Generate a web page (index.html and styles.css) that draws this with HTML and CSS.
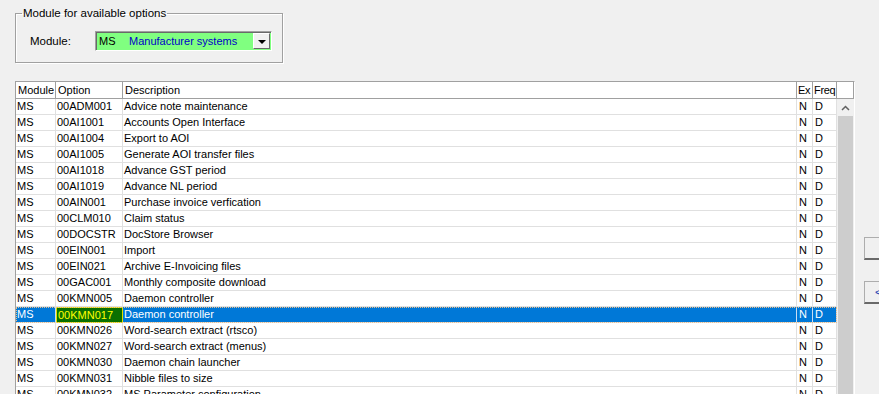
FILE: index.html
```html
<!DOCTYPE html>
<html lang="en">
<head>
    <meta charset="UTF-8">
    <title>Module options</title>
    <link rel="stylesheet" href="styles.css">
</head>
<body>
    <fieldset class="module-group">
        <legend>Module for available options</legend>
        <div class="module-row">
            <label class="module-label">Module:</label>
            <div class="combo">
                <span class="combo-code">MS</span>
                <span class="combo-name">Manufacturer systems</span>
                <span class="combo-button"><span class="arrow"></span></span>
            </div>
        </div>
    </fieldset>

    <div class="main">
        <div class="grid">
            <div class="grid-header">
                <div class="hcell">Module</div>
                <div class="hcell">Option</div>
                <div class="hcell">Description</div>
                <div class="hcell narrow">Ex</div>
                <div class="hcell narrow">Freq</div>
                <div class="hcell corner"></div>
            </div>
            <div class="grid-body">
                <div class="rows">
                    <div class="row"><div class="cell">MS</div><div class="cell">00ADM001</div><div class="cell">Advice note maintenance</div><div class="cell">N</div><div class="cell">D</div></div>
                    <div class="row"><div class="cell">MS</div><div class="cell">00AI1001</div><div class="cell">Accounts Open Interface</div><div class="cell">N</div><div class="cell">D</div></div>
                    <div class="row"><div class="cell">MS</div><div class="cell">00AI1004</div><div class="cell">Export to AOI</div><div class="cell">N</div><div class="cell">D</div></div>
                    <div class="row"><div class="cell">MS</div><div class="cell">00AI1005</div><div class="cell">Generate AOI transfer files</div><div class="cell">N</div><div class="cell">D</div></div>
                    <div class="row"><div class="cell">MS</div><div class="cell">00AI1018</div><div class="cell">Advance GST period</div><div class="cell">N</div><div class="cell">D</div></div>
                    <div class="row"><div class="cell">MS</div><div class="cell">00AI1019</div><div class="cell">Advance NL period</div><div class="cell">N</div><div class="cell">D</div></div>
                    <div class="row"><div class="cell">MS</div><div class="cell">00AIN001</div><div class="cell">Purchase invoice verfication</div><div class="cell">N</div><div class="cell">D</div></div>
                    <div class="row"><div class="cell">MS</div><div class="cell">00CLM010</div><div class="cell">Claim status</div><div class="cell">N</div><div class="cell">D</div></div>
                    <div class="row"><div class="cell">MS</div><div class="cell">00DOCSTR</div><div class="cell">DocStore Browser</div><div class="cell">N</div><div class="cell">D</div></div>
                    <div class="row"><div class="cell">MS</div><div class="cell">00EIN001</div><div class="cell">Import</div><div class="cell">N</div><div class="cell">D</div></div>
                    <div class="row"><div class="cell">MS</div><div class="cell">00EIN021</div><div class="cell">Archive E-Invoicing files</div><div class="cell">N</div><div class="cell">D</div></div>
                    <div class="row"><div class="cell">MS</div><div class="cell">00GAC001</div><div class="cell">Monthly composite download</div><div class="cell">N</div><div class="cell">D</div></div>
                    <div class="row"><div class="cell">MS</div><div class="cell">00KMN005</div><div class="cell">Daemon controller</div><div class="cell">N</div><div class="cell">D</div></div>
                    <div class="row selected"><div class="cell">MS</div><div class="cell current">00KMN017</div><div class="cell">Daemon controller</div><div class="cell">N</div><div class="cell">D</div></div>
                    <div class="row"><div class="cell">MS</div><div class="cell">00KMN026</div><div class="cell">Word-search extract (rtsco)</div><div class="cell">N</div><div class="cell">D</div></div>
                    <div class="row"><div class="cell">MS</div><div class="cell">00KMN027</div><div class="cell">Word-search extract (menus)</div><div class="cell">N</div><div class="cell">D</div></div>
                    <div class="row"><div class="cell">MS</div><div class="cell">00KMN030</div><div class="cell">Daemon chain launcher</div><div class="cell">N</div><div class="cell">D</div></div>
                    <div class="row"><div class="cell">MS</div><div class="cell">00KMN031</div><div class="cell">Nibble files to size</div><div class="cell">N</div><div class="cell">D</div></div>
                    <div class="row"><div class="cell">MS</div><div class="cell">00KMN032</div><div class="cell">MS Parameter configuration</div><div class="cell">N</div><div class="cell">D</div></div>
                </div>
                <div class="scrollbar">
                    <div class="scroll-up">
                        <svg width="9" height="6" viewBox="0 0 9 6"><path d="M1 5 L4.5 1.5 L8 5" fill="none" stroke="#606060" stroke-width="1.5"/></svg>
                    </div>
                    <div class="scroll-thumb"></div>
                </div>
            </div>
        </div>

        <div class="side-buttons">
            <button class="side-button"></button>
            <button class="side-button">&lt;</button>
        </div>
    </div>
</body>
</html>
```

FILE: styles.css
```css
body {
    margin: 0;
    padding: 0 0 0 15px;
    background-color: #f0f0f0;
    font-family: "Liberation Sans", Arial, sans-serif;
    font-size: 11px;
    color: #000;
    height: 394px;
    overflow: hidden;
}

/* group box */
.module-group {
    width: 268px;
    height: 56px;
    box-sizing: border-box;
    margin: 7px 0 0 0;
    padding: 11px 10px 0 14px;
    border: 1px solid #a0a0a0;
    box-shadow: 1px 1px 0 #fff, inset 1px 1px 0 #fff;
}

.module-group legend {
    font-size: 11.5px;
    line-height: 13px;
    padding: 0 1px;
    margin-left: -8px;
}

.module-row {
    display: flex;
    align-items: center;
}

.module-label {
    width: 65px;
    font-size: 11.5px;
}

.combo {
    width: 177px;
    height: 20px;
    box-sizing: border-box;
    display: flex;
    align-items: center;
    background-color: #80ff80;
    border: 1px solid;
    border-color: #a0a0a0 #fff #fff #a0a0a0;
    box-shadow: inset 1px 1px 0 #696969;
    padding-left: 3px;
    font-size: 11px;
}

.combo-code {
    width: 30px;
}

.combo-name {
    flex-grow: 1;
    color: #0000c8;
}

.combo-button {
    width: 17px;
    height: 16px;
    box-sizing: border-box;
    margin-right: 1px;
    background-color: #f0f0f0;
    border: 1px solid;
    border-color: #fff #696969 #696969 #fff;
    display: flex;
    align-items: center;
    justify-content: center;
}

.arrow {
    width: 0;
    height: 0;
    border-left: 4px solid transparent;
    border-right: 4px solid transparent;
    border-top: 4px solid #000;
    margin-top: 1px;
}

/* grid */
.main {
    display: flex;
    margin-top: 18px;
}

.grid {
    width: 840px;
    flex-shrink: 0;
    border: 1px solid;
    border-color: #a0a0a0 #fff #fff #a0a0a0;
    box-sizing: border-box;
    background-color: #fff;
}

.grid-header {
    display: grid;
    grid-template-columns: 40px 67px 674px 16px 24px 17px;
    height: 17px;
}

.hcell {
    box-sizing: border-box;
    border-right: 1px solid #a0a0a0;
    border-bottom: 1px solid #a0a0a0;
    padding-left: 2px;
    line-height: 16px;
    white-space: nowrap;
    overflow: hidden;
}

.hcell.narrow {
    padding-left: 1px;
    letter-spacing: -0.3px;
}

.grid-body {
    display: flex;
}

.rows {
    width: 821px;
}

.row {
    display: grid;
    grid-template-columns: 40px 67px 674px 16px 24px;
    height: 16px;
}

.cell {
    box-sizing: border-box;
    border-right: 1px solid #e0e0e0;
    border-bottom: 1px solid #e0e0e0;
    padding-left: 1px;
    line-height: 15px;
    white-space: nowrap;
    overflow: hidden;
}

.row .cell:nth-child(4),
.row .cell:nth-child(5) {
    padding-left: 2px;
}

.row.selected {
    background-color: #0078d7;
    color: #fff;
    outline: 1px dotted #e8c090;
    outline-offset: -1px;
}

.row.selected .cell {
    border-right-color: #c8ddf2;
}

.row.selected .cell.current {
    background-color: #0a7000;
    color: #ffff00;
    border: 1px solid #e0e000;
    line-height: 14px;
}

.scrollbar {
    width: 17px;
    background-color: #f0f0f0;
    display: flex;
    flex-direction: column;
}

.scroll-up {
    height: 17px;
    display: flex;
    align-items: center;
    justify-content: center;
}

.scroll-thumb {
    flex-grow: 1;
    margin: 0 1px;
    background-color: #cdcdcd;
}

/* right buttons */
.side-buttons {
    display: flex;
    flex-direction: column;
    gap: 21px;
    padding-top: 156px;
    margin-left: 9px;
}

.side-button {
    width: 75px;
    height: 23px;
    box-sizing: border-box;
    background-color: #f0f0f0;
    border: 1px solid #adadad;
    border-bottom: 2px solid #696969;
    text-align: left;
    padding-left: 10px;
    font-family: "Liberation Sans", Arial, sans-serif;
    font-size: 11px;
    color: #1a3cb0;
}
```
